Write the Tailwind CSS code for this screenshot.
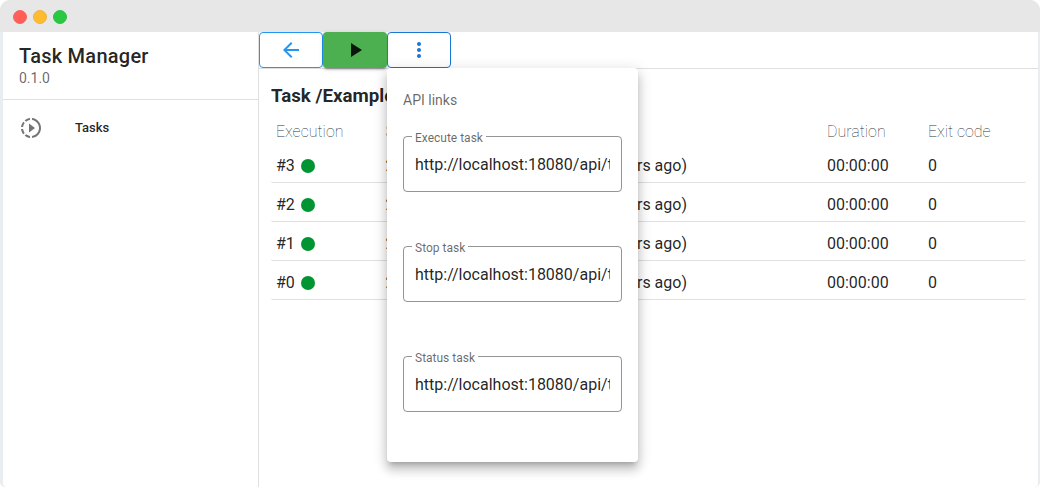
<!DOCTYPE html>
<html lang="en">
<head>
<meta charset="utf-8">
<title>Task Manager</title>
<script src="https://cdn.jsdelivr.net/npm/@tailwindcss/browser@4"></script>
</head>
<body class="h-[487px] overflow-hidden bg-white font-[Roboto,sans-serif] text-[16px] text-black/87">
<div class="relative flex h-[487px] w-[1040px] flex-col overflow-hidden rounded-[10px] rounded-b-[5px] bg-[#e9edf0]">
  <header class="flex h-8 shrink-0 items-center gap-[6px] bg-[#e7e7e7] pl-[13px] pt-[2px]">
    <span class="size-[14px] rounded-full border border-[#f5665f] bg-[#ff5f57]"></span>
    <span class="size-[14px] rounded-full border border-[#efb040] bg-[#febc2e]"></span>
    <span class="size-[14px] rounded-full border border-[#34bd49] bg-[#28c840]"></span>
  </header>
  <div class="ml-[3px] mr-[2px] flex flex-1 rounded-b bg-white">
    <aside class="w-64 shrink-0 border-r border-black/12">
      <div class="h-[68px] border-b border-black/12 px-4 pt-2">
        <h1 class="text-[20px] leading-8 font-medium tracking-[0.25px]">Task Manager</h1>
        <p class="text-[14px] leading-3 text-black/60">0.1.0</p>
      </div>
      <nav class="flex h-14 items-center pl-4">
        <svg class="size-6 fill-[#757575]" viewBox="0 0 24 24"><path d="M13.05 9.79L10 7.5v9l3.05-2.29L16 12zM11 4.07V2.05c-2.01.2-3.84 1-5.32 2.21L7.1 5.69c1.11-.86 2.44-1.44 3.9-1.62zM5.69 7.1L4.26 5.68C3.05 7.16 2.25 8.99 2.05 11h2.02c.18-1.46.76-2.79 1.62-3.9zM4.07 13H2.05c.2 2.01 1 3.84 2.21 5.32l1.43-1.43c-.86-1.1-1.44-2.43-1.62-3.89zm1.61 6.74C7.16 20.95 9 21.75 11 21.95v-2.02c-1.46-.18-2.79-.76-3.9-1.62l-1.42 1.43zM22 12c0 5.16-3.92 9.42-8.95 9.95v-2.02C16.97 19.41 20 16.05 20 12s-3.03-7.41-6.95-7.93V2.05C18.08 2.58 22 6.84 22 12z"/></svg>
        <span class="ml-8 text-[13px] leading-5 font-medium">Tasks</span>
      </nav>
    </aside>
    <main class="flex-1">
      <div class="flex h-[37px] border-b border-black/12">
        <button class="flex h-9 w-16 items-center justify-center rounded border border-[#2196f3] text-[#2196f3]"><svg class="size-6 fill-current" viewBox="0 0 24 24"><path d="M20 11H7.83l5.59-5.59L12 4l-8 8 8 8 1.41-1.41L7.83 13H20z"/></svg></button>
        <button class="flex h-9 w-16 items-center justify-center rounded bg-[#4caf50] shadow-[0px_3px_1px_-2px_rgba(0,0,0,0.2),0px_2px_2px_0px_rgba(0,0,0,0.14),0px_1px_5px_0px_rgba(0,0,0,0.12)]"><svg class="size-6 fill-black/87" viewBox="0 0 24 24"><path d="M8 5v14l11-7z"/></svg></button>
        <button class="flex h-9 w-16 items-center justify-center rounded border border-[#1976d2] text-[#1976d2]"><svg class="size-6 fill-current" viewBox="0 0 24 24"><path d="M12 8c1.1 0 2-.9 2-2s-.9-2-2-2-2 .9-2 2 .9 2 2 2zm0 2c-1.1 0-2 .9-2 2s.9 2 2 2 2-.9 2-2-.9-2-2-2zm0 6c-1.1 0-2 .9-2 2s.9 2 2 2 2-.9 2-2-.9-2-2-2z"/></svg></button>
      </div>
      <section class="pl-3 pr-3 pt-3">
        <h2 class="h-[30px] text-[18.72px] leading-[30px] font-bold">Task /Example</h2>
        <div class="grid h-[33px] grid-cols-[109.5px_441.5px_101px_1fr] items-center pl-[5px] pt-[9px] font-thin leading-6 text-black/87"><span>Execution</span><span>Started</span><span>Duration</span><span>Exit code</span></div>
        <div class="grid h-[39px] grid-cols-[109.5px_441.5px_101px_1fr] items-center rounded-[2px] border-b border-black/12 pl-[5px] pt-[5px]"><span class="flex items-center gap-[6px]">#3 <i class="size-[14px] rounded-full bg-[#009432]"></i></span><span class="flex w-[301.5px] justify-between"><span>2</span><span>(hours ago)</span></span><span>00:00:00</span><span>0</span></div>
        <div class="grid h-[39px] grid-cols-[109.5px_441.5px_101px_1fr] items-center rounded-[2px] border-b border-black/12 pl-[5px] pt-[5px]"><span class="flex items-center gap-[6px]">#2 <i class="size-[14px] rounded-full bg-[#009432]"></i></span><span class="flex w-[301.5px] justify-between"><span>2</span><span>(hours ago)</span></span><span>00:00:00</span><span>0</span></div>
        <div class="grid h-[39px] grid-cols-[109.5px_441.5px_101px_1fr] items-center rounded-[2px] border-b border-black/12 pl-[5px] pt-[5px]"><span class="flex items-center gap-[6px]">#1 <i class="size-[14px] rounded-full bg-[#009432]"></i></span><span class="flex w-[301.5px] justify-between"><span>2</span><span>(hours ago)</span></span><span>00:00:00</span><span>0</span></div>
        <div class="grid h-[39px] grid-cols-[109.5px_441.5px_101px_1fr] items-center rounded-[2px] border-b border-black/12 pl-[5px] pt-[5px]"><span class="flex items-center gap-[6px]">#0 <i class="size-[14px] rounded-full bg-[#009432]"></i></span><span class="flex w-[301.5px] justify-between"><span>2</span><span>(hours ago)</span></span><span>00:00:00</span><span>0</span></div>
      </section>
    </main>
  </div>
  <div class="absolute left-[387px] top-[68px] h-[394px] w-[251px] rounded bg-white px-4 pt-2 shadow-[0px_5px_5px_-3px_rgba(0,0,0,0.2),0px_8px_10px_1px_rgba(0,0,0,0.14),0px_3px_14px_2px_rgba(0,0,0,0.12)]">
    <p class="h-12 text-[14px] leading-[48px] text-black/60">API links</p>
    <div class="mt-3 flex flex-col gap-[54px]">
      <div class="relative h-14 rounded border border-black/42 px-[11px]"><span class="absolute -top-[9px] left-2 bg-white px-[3px] text-[12px] leading-5 text-black/60">Execute task</span><div class="overflow-hidden whitespace-nowrap leading-[56px]">http://localhost:18080/api/tasks</div></div>
      <div class="relative h-14 rounded border border-black/42 px-[11px]"><span class="absolute -top-[9px] left-2 bg-white px-[3px] text-[12px] leading-5 text-black/60">Stop task</span><div class="overflow-hidden whitespace-nowrap leading-[56px]">http://localhost:18080/api/tasks</div></div>
      <div class="relative h-14 rounded border border-black/42 px-[11px]"><span class="absolute -top-[9px] left-2 bg-white px-[3px] text-[12px] leading-5 text-black/60">Status task</span><div class="overflow-hidden whitespace-nowrap leading-[56px]">http://localhost:18080/api/tasks</div></div>
    </div>
  </div>
</div>
</body>
</html>
